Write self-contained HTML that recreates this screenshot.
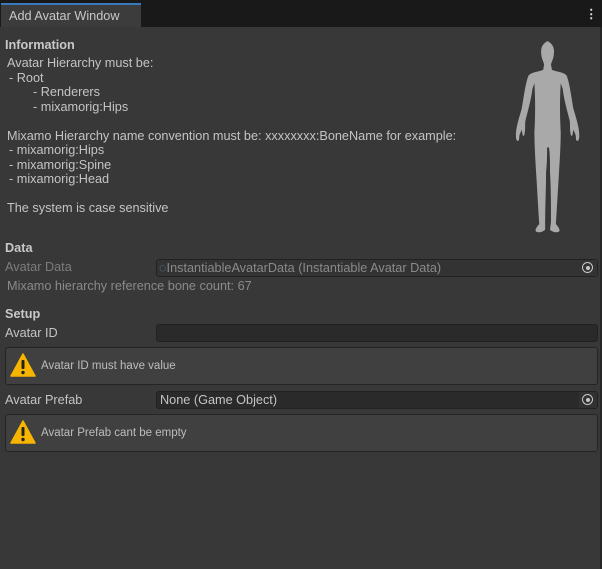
<!DOCTYPE html>
<html><head><style>
body{margin:0;width:602px;height:569px;background:#383838;font-family:"Liberation Sans",sans-serif;font-size:12.7px;color:#c4c4c4;position:relative;overflow:hidden}
.a{position:absolute;white-space:pre;line-height:14px}
.b{font-weight:bold;color:#c8c8c8}
.f{position:absolute;left:156px;width:440px;height:16px;background:#2a2a2a;border:1px solid #212121;border-radius:3px}
.h{position:absolute;left:5px;width:591px;background:#404040;border:1px solid #242424;border-radius:3px}
.t{position:absolute;right:0;top:0;width:18px;height:16px;background:#313131}
.t:after{content:"";position:absolute;left:3px;top:2px;width:9px;height:9px;border:1.3px solid #c8c8c8;border-radius:50%}
.t:before{content:"";position:absolute;left:7px;top:6px;width:4px;height:4px;background:#c8c8c8;border-radius:50%}
.l{position:absolute;left:0;white-space:pre;line-height:14.5px}
</style></head><body>
<div style="position:absolute;left:0;top:0;width:602px;height:27px;background:#191919"></div>
<div style="position:absolute;left:1px;top:3px;width:140px;height:24px;background:#3c3c3c;border-top:2px solid #3a79bb;box-sizing:border-box"></div>
<div class="a" style="left:9px;top:9px;font-size:12.7px;color:#c8c8c8">Add Avatar Window</div>
<div class="a" style="left:585px;top:7px;color:#ddd;font-weight:bold">⋮</div>
<div style="position:absolute;left:600px;top:27px;width:2px;height:542px;background:#262626"></div>
<div class="a b" style="left:5px;top:38px">Information</div>
<div style="position:absolute;left:0;top:56px">
<div class="l" style="left:7px;top:0">Avatar Hierarchy must be:</div>
<div class="l" style="left:9px;top:14.5px">- Root</div>
<div class="l" style="left:33px;top:29px">- Renderers</div>
<div class="l" style="left:33px;top:43.5px">- mixamorig:Hips</div>
<div class="l" style="left:7px;top:72.5px">Mixamo Hierarchy name convention must be: xxxxxxxx:BoneName for example:</div>
<div class="l" style="left:9px;top:87px">- mixamorig:Hips</div>
<div class="l" style="left:9px;top:101.5px">- mixamorig:Spine</div>
<div class="l" style="left:9px;top:116px">- mixamorig:Head</div>
<div class="l" style="left:7px;top:145px">The system is case sensitive</div>
</div>
<svg style="position:absolute;left:511px;top:40px" width="78" height="194" viewBox="0 0 80 175" preserveAspectRatio="none"><path fill="#a9a9a9" d="M40 1c-6 0-10 5-9 11 0 4 2 7 3 10l-1 5c-6 2-12 2-15 5-3 6-5 20-7 30-3 9-6 17-6 24 0 4 1 5 2 5 2 0 1-4 2-6l2-4 1 5c1 1 2 0 2-2 1-4 0-9 1-12 3-10 6-20 7-28l2-5c1 15 1 30 0 44 0 12 1 25 2 40 1 14 2 30 3 43-3 3-5 6-3 7 3 1 7 0 9-2v-7c0-15 1-30 1-45 1-8 1-15 1-22h2c1 7 1 14 1 22 1 15 1 30 1 45l-1 7c2 2 6 3 9 2 2-1 0-4-3-7 1-13 2-29 3-43 1-15 2-28 2-40-1-14-1-29 0-44l2 5c1 8 4 18 7 28 1 3 0 8 1 12 0 2 1 3 2 2l1-5 2 4c1 2 0 6 2 6 1 0 2-1 2-5 0-7-3-15-6-24-2-10-4-24-7-30-3-3-9-3-15-5l-1-5c1-3 3-6 3-10 1-6-3-11-9-11z"/></svg>
<div class="a b" style="left:5px;top:241px">Data</div>
<div class="a" style="left:5px;top:260px;color:#7d7d7d">Avatar Data</div>
<div class="f" style="top:259px;background:#333"><div class="a" style="left:2px;top:1px;color:#8a8a8a"><span style="color:#6a8aa0">◌</span>InstantiableAvatarData (Instantiable Avatar Data)</div><div class="t" style="background:#333"></div></div>
<div class="a" style="left:7px;top:279px;color:#8a8a8a">Mixamo hierarchy reference bone count: 67</div>
<div class="a b" style="left:5px;top:307px">Setup</div>
<div class="a" style="left:5px;top:326px">Avatar ID</div>
<div class="f" style="top:324px"></div>
<div class="h" style="top:347px;height:36px"><svg style="position:absolute;left:4px;top:5px" width="26" height="24" viewBox="0 0 26 24"><path d="M13 1L25 23H1Z" fill="#f7b500" stroke="#f7b500" stroke-linejoin="round" stroke-width="1.5"/><rect x="11.5" y="7" width="3" height="9" rx="1" fill="#222"/><circle cx="13" cy="19.5" r="1.7" fill="#222"/></svg><div class="a" style="left:35px;top:11px;font-size:11.5px;color:#bdbdbd">Avatar ID must have value</div></div>
<div class="a" style="left:5px;top:393px">Avatar Prefab</div>
<div class="f" style="top:391px"><div class="a" style="left:3px;top:1px;color:#c4c4c4">None (Game Object)</div><div class="t"></div></div>
<div class="h" style="top:414px;height:36px"><svg style="position:absolute;left:4px;top:5px" width="26" height="24" viewBox="0 0 26 24"><path d="M13 1L25 23H1Z" fill="#f7b500" stroke="#f7b500" stroke-linejoin="round" stroke-width="1.5"/><rect x="11.5" y="7" width="3" height="9" rx="1" fill="#222"/><circle cx="13" cy="19.5" r="1.7" fill="#222"/></svg><div class="a" style="left:35px;top:11px;font-size:11.5px;color:#bdbdbd">Avatar Prefab cant be empty</div></div>
</body></html>
